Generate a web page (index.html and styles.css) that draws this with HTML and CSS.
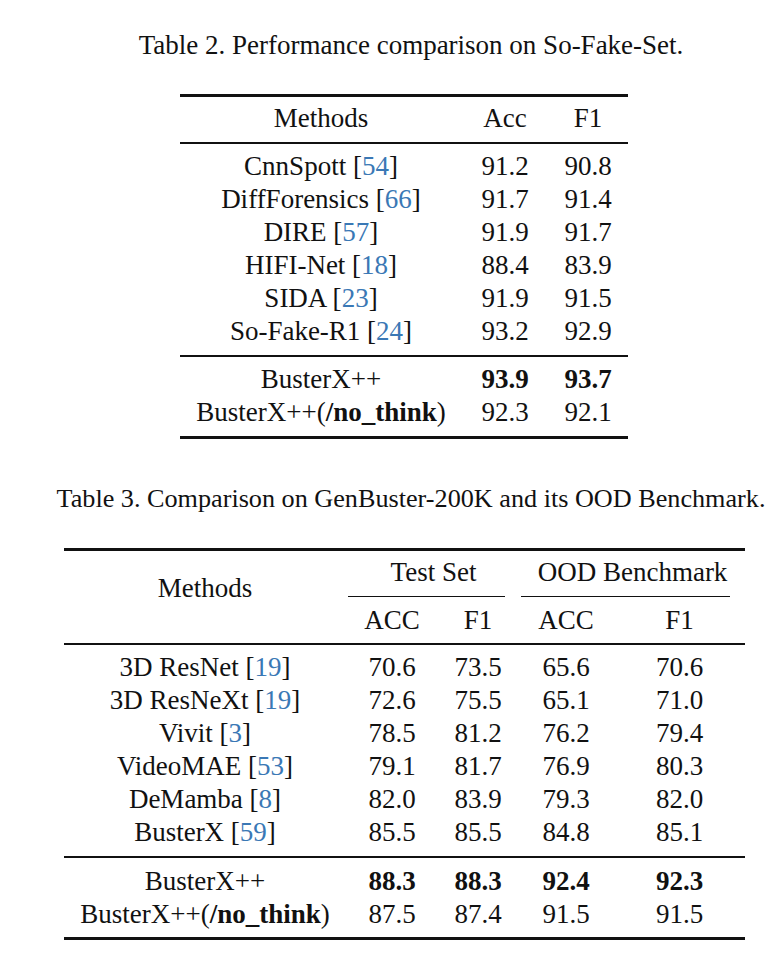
FILE: index.html
```html
<!DOCTYPE html>
<html>
<head>
<meta charset="utf-8">
<link rel="stylesheet" href="styles.css">
</head>
<body>
<div class="page">
  <div class="caption cap2">Table 2. Performance comparison on So-Fake-Set.</div>
  <table class="tbl t2">
    <colgroup><col class="c-m2"><col class="c-acc2"><col class="c-f12"></colgroup>
    <thead>
      <tr><th>Methods</th><th>Acc</th><th>F1</th></tr>
    </thead>
    <tbody>
      <tr><td>CnnSpott [<span class="ref">54</span>]</td><td>91.2</td><td>90.8</td></tr>
      <tr><td>DiffForensics [<span class="ref">66</span>]</td><td>91.7</td><td>91.4</td></tr>
      <tr><td>DIRE [<span class="ref">57</span>]</td><td>91.9</td><td>91.7</td></tr>
      <tr><td>HIFI-Net [<span class="ref">18</span>]</td><td>88.4</td><td>83.9</td></tr>
      <tr><td>SIDA [<span class="ref">23</span>]</td><td>91.9</td><td>91.5</td></tr>
      <tr><td>So-Fake-R1 [<span class="ref">24</span>]</td><td>93.2</td><td>92.9</td></tr>
    </tbody>
    <tbody>
      <tr><td>BusterX++</td><td class="b">93.9</td><td class="b">93.7</td></tr>
      <tr><td>BusterX++(<b>/no_think</b>)</td><td>92.3</td><td>92.1</td></tr>
    </tbody>
  </table>

  <div class="caption cap3">Table 3. Comparison on GenBuster-200K and its OOD Benchmark.</div>
  <table class="tbl t3">
    <colgroup><col class="c-m3"><col class="c-a3"><col class="c-f3"><col class="c-oa3"><col class="c-of3"></colgroup>
    <thead>
      <tr class="h1">
        <th rowspan="2" class="meth">Methods</th>
        <th colspan="2" class="grpcell"><span class="grp g-test">Test Set</span></th>
        <th colspan="2" class="grpcell"><span class="grp g-ood">OOD Benchmark</span></th>
      </tr>
      <tr class="h2"><th>ACC</th><th>F1</th><th>ACC</th><th>F1</th></tr>
    </thead>
    <tbody class="main">
      <tr><td>3D ResNet [<span class="ref">19</span>]</td><td>70.6</td><td>73.5</td><td>65.6</td><td>70.6</td></tr>
      <tr><td>3D ResNeXt [<span class="ref">19</span>]</td><td>72.6</td><td>75.5</td><td>65.1</td><td>71.0</td></tr>
      <tr><td>Vivit [<span class="ref">3</span>]</td><td>78.5</td><td>81.2</td><td>76.2</td><td>79.4</td></tr>
      <tr><td>VideoMAE [<span class="ref">53</span>]</td><td>79.1</td><td>81.7</td><td>76.9</td><td>80.3</td></tr>
      <tr><td>DeMamba [<span class="ref">8</span>]</td><td>82.0</td><td>83.9</td><td>79.3</td><td>82.0</td></tr>
      <tr><td>BusterX [<span class="ref">59</span>]</td><td>85.5</td><td>85.5</td><td>84.8</td><td>85.1</td></tr>
    </tbody>
    <tbody class="ours">
      <tr><td>BusterX++</td><td class="b">88.3</td><td class="b">88.3</td><td class="b">92.4</td><td class="b">92.3</td></tr>
      <tr><td>BusterX++(<b>/no_think</b>)</td><td>87.5</td><td>87.4</td><td>91.5</td><td>91.5</td></tr>
    </tbody>
  </table>
</div>
</body>
</html>
```

FILE: styles.css
```css
html, body {
  margin: 0;
  padding: 0;
  background: #ffffff;
}

.page {
  width: 776px;
  font-family: "Liberation Serif", "Times New Roman", serif;
  font-size: 27px;
  color: #111111;
  padding-top: 28px;
}

.caption {
  line-height: 34px;
  text-align: center;
  padding-left: 46px;
  white-space: nowrap;
}

.cap3 {
  margin-top: 43px;
  font-size: 26.2px;
}

.tbl {
  border-collapse: collapse;
  table-layout: fixed;
  border-top: 3px solid #111111;
  border-bottom: 3px solid #111111;
}

.t2 {
  width: 448px;
  margin-left: 180px;
  margin-top: 32px;
}

.t3 {
  width: 681px;
  margin-left: 64px;
  margin-top: 32px;
}

.c-m2 { width: 282px; }
.c-acc2 { width: 86px; }
.c-f12 { width: 80px; }

.c-m3 { width: 282px; }
.c-a3 { width: 92px; }
.c-f3 { width: 80px; }
.c-oa3 { width: 96px; }
.c-of3 { width: 131px; }

.tbl th,
.tbl td {
  font-weight: normal;
  text-align: center;
  padding: 0;
  line-height: 33px;
  white-space: nowrap;
}

.tbl th {
  padding-top: 5px;
  padding-bottom: 7px;
}

.tbl tbody {
  border-top: 2px solid #111111;
}

.tbl tbody tr:first-child td {
  padding-top: 6px;
}

.tbl tbody tr:last-child td {
  padding-bottom: 7px;
}

.t3 tbody.main tr:first-child td {
  padding-top: 6px;
}

.t3 tbody.ours tr:first-child td {
  padding-top: 7px;
}

.t3 tbody.ours tr:last-child td {
  padding-bottom: 6px;
}

.t3 .h1 th.grpcell {
  padding-top: 5px;
  padding-bottom: 0;
}

.t3 .h1 th.meth {
  padding-top: 0;
  padding-bottom: 18px;
}

.t3 .h2 th {
  padding-top: 7px;
  padding-bottom: 6px;
}

.grp {
  display: block;
  border-bottom: 1px solid #111111;
  padding-bottom: 7px;
  padding-left: 14px;
}

.g-test {
  margin-left: 2px;
  margin-right: 13px;
}

.g-ood {
  margin-left: 3px;
  margin-right: 15px;
}

.tbl td.b {
  font-weight: bold;
}

.ref {
  color: #3a78b5;
}
```
